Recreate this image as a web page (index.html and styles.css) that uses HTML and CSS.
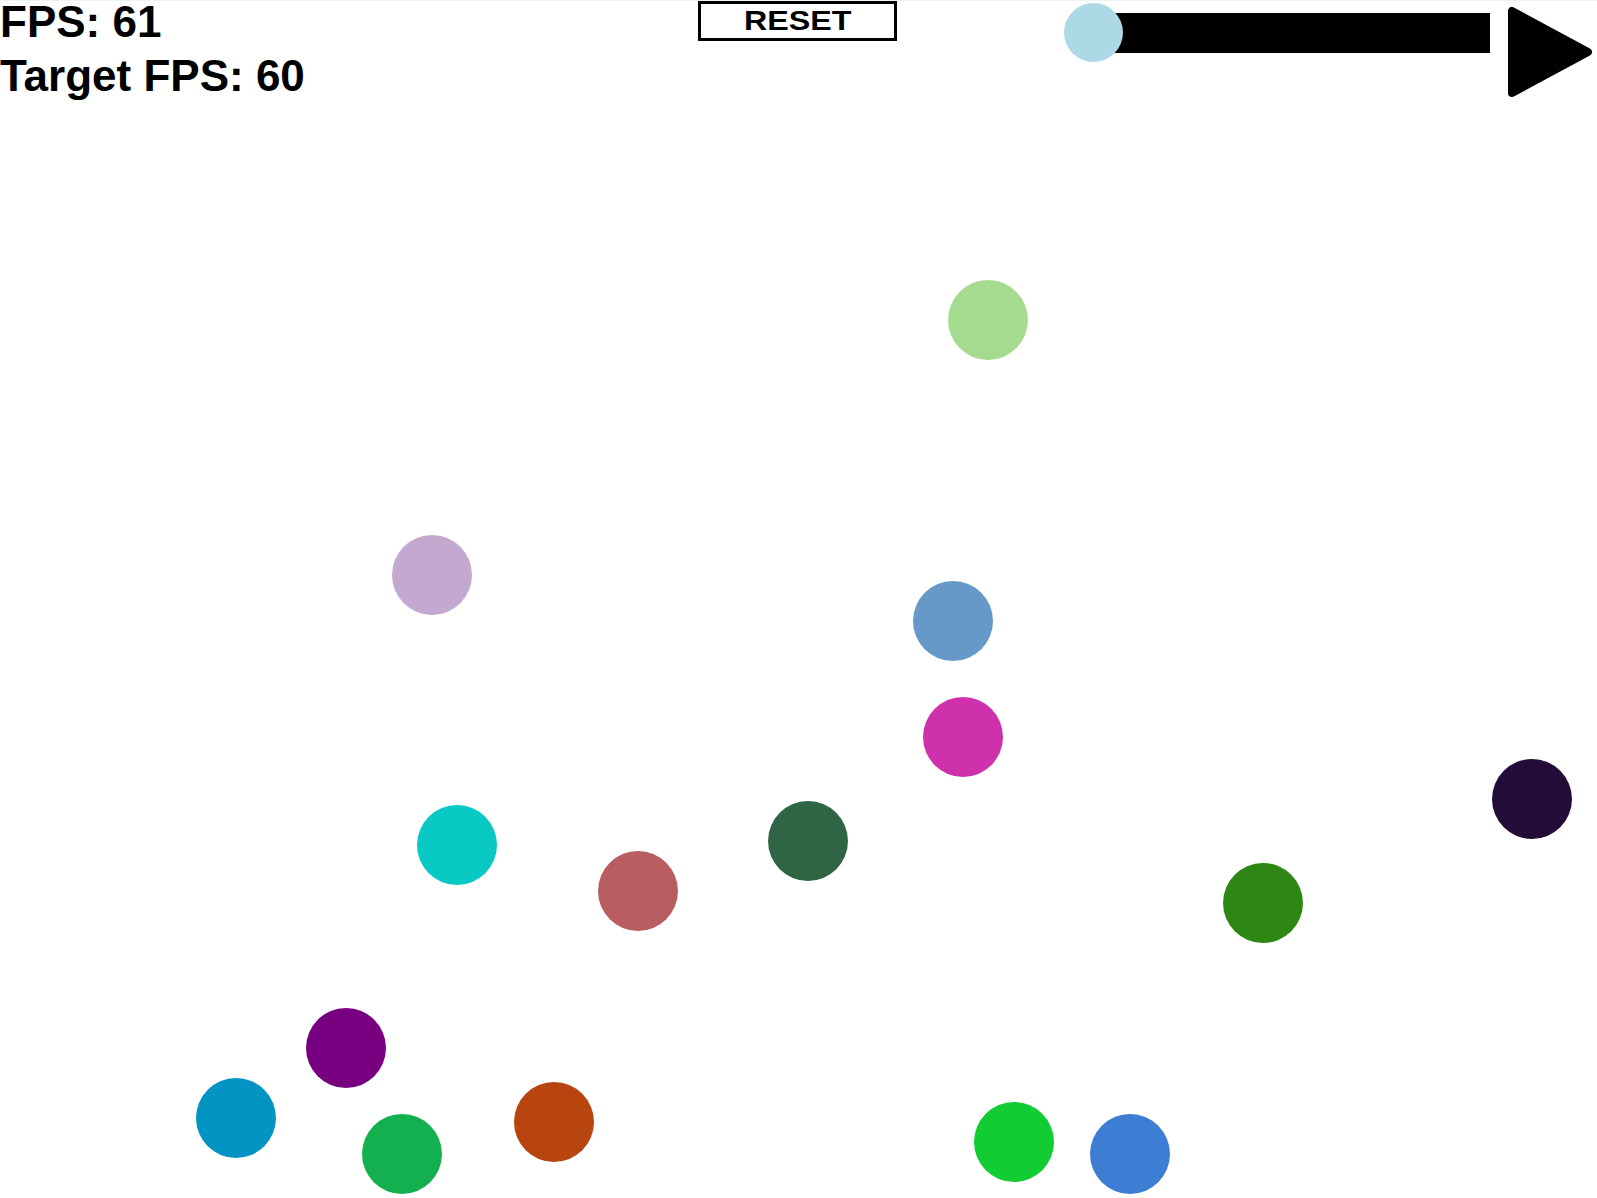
FILE: index.html
```html
<!DOCTYPE html>
<html>
<head>
<meta charset="utf-8">
<link rel="stylesheet" href="styles.css">
</head>
<body>
<div class="stage">
  <div class="ball" style="left:948px;top:279px;background:#a5db8f"></div>
  <div class="ball" style="left:392px;top:534px;background:#c3a8cf"></div>
  <div class="ball" style="left:913px;top:580px;background:#6699c8"></div>
  <div class="ball" style="left:923px;top:696px;background:#cf31ad"></div>
  <div class="ball" style="left:1492px;top:758px;background:#240c38"></div>
  <div class="ball" style="left:417px;top:804px;background:#08c9c4"></div>
  <div class="ball" style="left:768px;top:800px;background:#2f6444"></div>
  <div class="ball" style="left:598px;top:850px;background:#b95e60"></div>
  <div class="ball" style="left:1223px;top:862px;background:#2e8615"></div>
  <div class="ball" style="left:306px;top:1007px;background:#780080"></div>
  <div class="ball" style="left:196px;top:1077px;background:#0394c4"></div>
  <div class="ball" style="left:362px;top:1113px;background:#14b050"></div>
  <div class="ball" style="left:514px;top:1081px;background:#b8440f"></div>
  <div class="ball" style="left:974px;top:1101px;background:#12cc33"></div>
  <div class="ball" style="left:1090px;top:1113px;background:#3d7ed4"></div>

  <div class="hud">
    <div class="stats">
      <div class="stat">FPS: 61</div>
      <div class="stat stat-second">Target FPS: 60</div>
    </div>
    <div class="reset"><span class="reset-label">RESET</span></div>
    <div class="slider">
      <div class="track"></div>
      <div class="knob"></div>
    </div>
    <svg class="play" width="90" height="104" viewBox="0 0 90 104">
      <polygon points="7,11 7,93 83,52" fill="#000" stroke="#000" stroke-width="8" stroke-linejoin="round"/>
    </svg>
  </div>
</div>
</body>
</html>
```

FILE: styles.css
```css
html, body {
  margin: 0;
  padding: 0;
  background: #ffffff;
}
.stage {
  position: relative;
  width: 1597px;
  height: 1198px;
  overflow: hidden;
  background: #ffffff;
  border-top: 1px solid #eef3f7;
  box-sizing: border-box;
  font-family: "Liberation Sans", Arial, sans-serif;
  color: #000;
}
.ball {
  position: absolute;
  width: 80px;
  height: 80px;
  border-radius: 50%;
}
.hud {
  position: absolute;
  left: 0;
  top: -1px;
  display: flex;
  align-items: flex-start;
}
.stats {
  width: 698px;
  padding-top: 0;
}
.stat {
  font-size: 44px;
  font-weight: bold;
  line-height: 44px;
  white-space: nowrap;
}
.stat-second {
  margin-top: 10px;
}
.reset {
  box-sizing: border-box;
  width: 199px;
  height: 40px;
  margin-top: 1px;
  border: 3px solid #000;
  display: flex;
  align-items: center;
  justify-content: center;
}
.reset-label {
  display: inline-block;
  font-size: 28px;
  font-weight: bold;
  line-height: 1;
  transform: scaleX(1.15);
  margin-top: -1px;
}
.slider {
  position: relative;
  width: 426px;
  height: 64px;
  margin-left: 167px;
}
.track {
  position: absolute;
  left: 51px;
  top: 13px;
  width: 375px;
  height: 40px;
  background: #000;
}
.knob {
  position: absolute;
  left: 0;
  top: 3px;
  width: 59px;
  height: 59px;
  border-radius: 50%;
  background: #add8e6;
}
.play {
  display: block;
  margin-left: 15px;
}
```
